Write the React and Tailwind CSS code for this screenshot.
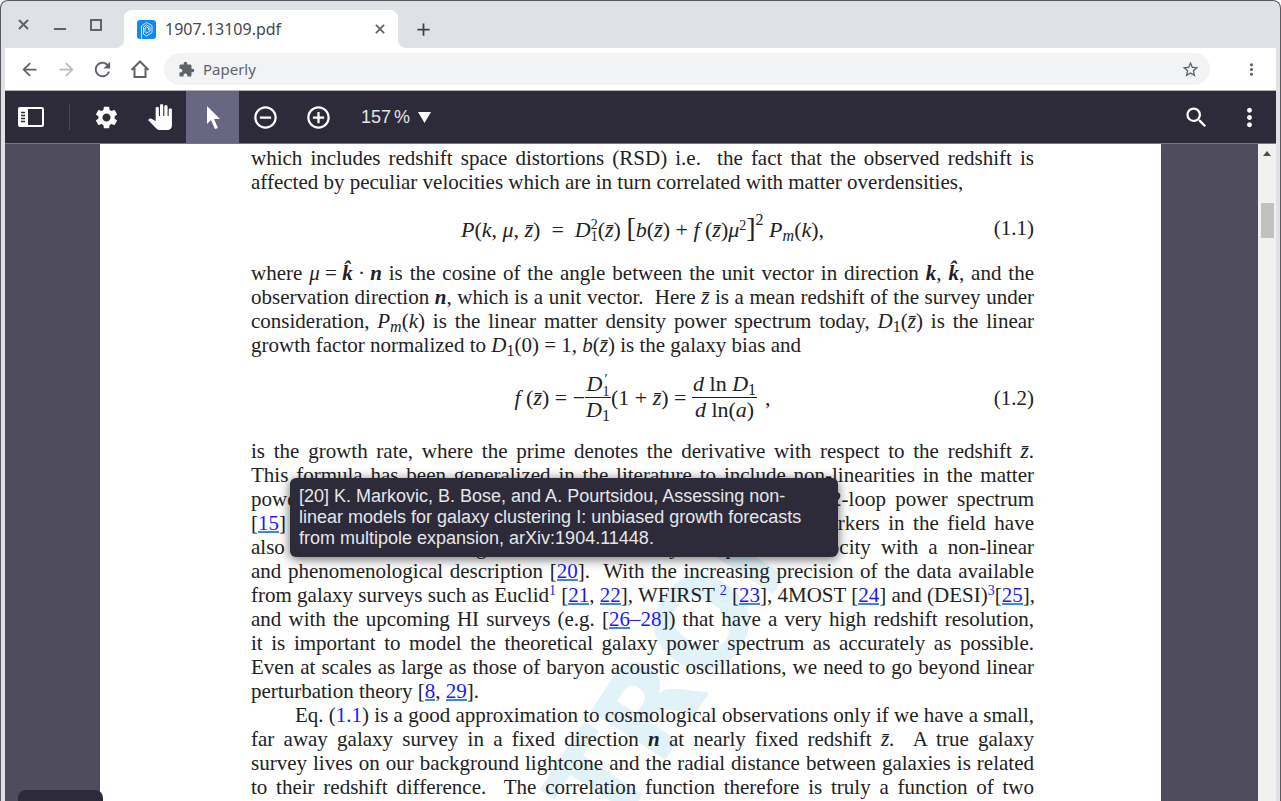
import {
  MdSettings,
  MdPanTool,
  MdRemoveCircleOutline,
  MdAddCircleOutline,
  MdSearch,
  MdMoreVert,
  MdArrowBack,
  MdArrowForward,
  MdRefresh,
  MdExtension,
  MdStarBorder,
  MdAdd,
} from "react-icons/md";

export default function App() {
  return (
    <div className="flex h-screen flex-col overflow-hidden rounded-t-lg border-t border-r border-l border-[#5a5a5e] bg-[#dee1e6] font-['Liberation_Sans',Arial,sans-serif]">
      <TabStrip />
      <div className="mr-1 ml-1 flex min-h-0 flex-1 flex-col">
        <AddressBar />
        <PdfToolbar />
        <Viewer />
      </div>
    </div>
  );
}

/* browser chrome */
function TabStrip() {
  return (
    <header className="flex h-[47px] shrink-0 items-end text-[#5f6368]">
      <div className="flex h-full items-center pl-[10px]">
        <button aria-label="Close window" className="grid w-6 place-items-center"><CrossIcon size={11} /></button>
        <button aria-label="Minimize" className="ml-[13px] grid h-3 w-6 place-items-center pt-2"><span className="h-[2px] w-3 bg-[#5f6368]" /></button>
        <button aria-label="Maximize" className="ml-3 grid w-6 place-items-center"><span className="size-3 border-2 border-[#5f6368]" /></button>
      </div>
      <svg className="ml-2" width="8" height="8" fill="white"><path d="M8 0v8H0a8 8 0 0 0 8-8z" /></svg>
      <div className="flex h-[38px] w-[274px] items-center rounded-t-lg bg-white px-[13px]">
        <Favicon />
        <span className="ml-[9px] flex-1 font-['Noto_Sans',sans-serif] text-base text-[#45484d]">1907.13109.pdf</span>
        <button aria-label="Close tab"><CrossIcon size={10} /></button>
      </div>
      <svg width="8" height="8" fill="white"><path d="M0 0v8h8a8 8 0 0 1-8-8z" /></svg>
      <button aria-label="New tab" className="mb-2 ml-[7px] text-[#3c4043]"><MdAdd size={21} /></button>
    </header>
  );
}

function AddressBar() {
  return (
    <nav className="flex h-[43px] shrink-0 items-center border-b border-[#b4b4b6] bg-white pl-[14px] text-[#5f6368]">
      <button aria-label="Back"><MdArrowBack size={21} /></button>
      <button aria-label="Forward" className="ml-4 text-[#babcbe]"><MdArrowForward size={21} /></button>
      <button aria-label="Reload" className="ml-[14px]"><MdRefresh size={23} /></button>
      <button aria-label="Home" className="ml-4"><HomeIcon /></button>
      <div className="ml-[14px] flex h-8 flex-1 items-center rounded-full bg-[#f1f3f4] pr-[10px] pl-[14px]">
        <MdExtension size={17} />
        <input
          aria-label="Address"
          defaultValue="Paperly"
          className="ml-2 min-w-0 flex-1 bg-transparent font-['Noto_Sans',sans-serif] text-[15px] outline-none"
        />
        <button aria-label="Bookmark"><MdStarBorder size={19} /></button>
      </div>
      <button aria-label="Browser menu" className="mr-[15px] ml-8"><MdMoreVert size={19} /></button>
    </nav>
  );
}

function PdfToolbar() {
  return (
    <div className="flex h-[53px] shrink-0 items-center border-b border-[#77777b] bg-[#2d2b39] text-white">
      <button aria-label="Toggle sidebar" className="ml-[13px]"><SidebarIcon /></button>
      <span className="mr-[10px] ml-[25px] h-[26px] w-px bg-[#4b4959]" />
      <ToolButton label="Settings"><MdSettings size={27} /></ToolButton>
      <ToolButton label="Hand tool"><MdPanTool size={26} /></ToolButton>
      <ToolButton label="Select tool" active>
        <svg width="14" height="23" viewBox="0 0 14 23" fill="currentColor">
          <path d="M1 0v18l4-4 4 9 3-1-4-9h6z" />
        </svg>
      </ToolButton>
      <ToolButton label="Zoom out"><MdRemoveCircleOutline size={27} /></ToolButton>
      <ToolButton label="Zoom in"><MdAddCircleOutline size={27} /></ToolButton>
      <button className="ml-4 flex items-center text-lg text-[#e4e4e6]">
        <span>157</span>
        <span className="ml-[3px]">%</span>
        <svg className="ml-2" width="13" height="11" viewBox="0 0 13 11" fill="white"><path d="M0 0h13L6.500 11z" /></svg>
      </button>
      <button aria-label="Search" className="ml-auto"><MdSearch size={27} /></button>
      <button aria-label="More" className="mr-3 ml-[25px]"><MdMoreVert size={29} /></button>
    </div>
  );
}

function ToolButton({ label, active, children }) {
  return (
    <button
      aria-label={label}
      aria-pressed={active}
      className={`grid h-full w-[53px] place-items-center ${active ? "bg-[#686680]" : ""}`}
    >
      {children}
    </button>
  );
}

function Viewer() {
  return (
    <main className="relative flex min-h-0 flex-1 bg-[#4e4c5d]">
      <div className="mr-[97px] ml-[95px] flex-1 overflow-hidden bg-white pl-6">
        <Page />
      </div>
      <div className="flex w-[18px] flex-col items-center bg-[#f1f1f1]">
        <svg className="mt-[7px]" width="8" height="5" viewBox="0 0 8 5" fill="#505050"><path d="M4 0l4 5H0z" /></svg>
        <div className="mt-[47px] h-[35px] w-[13px] bg-[#c1c1c1]" />
      </div>
      <div className="absolute -bottom-px left-[13px] h-3 w-[85px] rounded-t-lg bg-[#2d2b39]" />
    </main>
  );
}

/* document */
function Page() {
  return (
    <article className="relative mx-auto w-[783px] pt-[2px] font-['Liberation_Serif','Times_New_Roman',serif] text-[21px] leading-6 text-[#222222]">
      <span aria-hidden="true" className="absolute top-[592px] left-[363px] origin-[0_103px] -rotate-57 font-['DejaVu_Sans',sans-serif] text-[122px] leading-none font-bold whitespace-nowrap text-[#e1f3f9]">
        TRON
      </span>
      <div className="relative">
        <Line>which includes redshift space distortions (RSD) i.e. &nbsp;the fact that the observed redshift is</Line>
        <Line last>affected by peculiar velocities which are in turn correlated with matter overdensities,</Line>
      </div>

      <Equation number="(1.1)">
        <M>
          <i>P</i>(<i>k</i>, <i>μ</i>, <Zbar />)&nbsp; = &nbsp;<i>D</i><Scripts up="2" down="1" />(<Zbar />)&nbsp;
          <Big>[</Big><i>b</i>(<Zbar />) + <i>f</i> (<Zbar />)<i>μ</i><Sup>2</Sup><Big>]</Big>
          <span className="align-[12px] text-base leading-none">2</span>
          &nbsp;<i>P</i><Sub><i>m</i></Sub>(<i>k</i>),
        </M>
      </Equation>

      <div className="relative">
        <Line>where <M><i>μ</i> = <Khat /> · <Vec>n</Vec></M> is the cosine of the angle between the unit vector in direction <Vec>k</Vec>, <Khat />, and the</Line>
        <Line>observation direction <Vec>n</Vec>, which is a unit vector. &nbsp;Here <Zbar /> is a mean redshift of the survey under</Line>
        <Line>consideration, <M><i>P</i><Sub><i>m</i></Sub>(<i>k</i>)</M> is the linear matter density power spectrum today, <M><i>D</i><Sub>1</Sub>(<Zbar />)</M> is the linear</Line>
        <Line last>growth factor normalized to <M><i>D</i><Sub>1</Sub>(0) = 1</M>, <M><i>b</i>(<Zbar />)</M> is the galaxy bias and</Line>
      </div>

      <Equation number="(1.2)" tall>
        <M><i>f</i> (<Zbar />) = −</M>
        <Fraction top={<><i>D</i><Scripts up="′" down="1" /></>} bottom={<><i>D</i><Sub>1</Sub></>} />
        <M>(1 + <Zbar />) =&nbsp;</M>
        <Fraction top={<><i>d</i> ln <i>D</i><Sub>1</Sub></>} bottom={<><i>d</i> ln(<i>a</i>)</>} />
        <span className="ml-2">,</span>
      </Equation>

      <div className="relative">
        <Line>is the growth rate, where the prime denotes the derivative with respect to the redshift <Zbar />.</Line>
        <Line>This formula has been generalized in the literature to include non-linearities in the matter</Line>
        <Line>power spectrum, for example with the perturbative results up to 2-loop power spectrum</Line>
        <Line>[<Cite>15</Cite>] or effective field theory descriptions, and several other co-workers in the field have</Line>
        <Line>also studied the modelling of the distortions by the peculiar velocity with a non-linear</Line>
        <Line>and phenomenological description [<Cite>20</Cite>]. &nbsp;With the increasing precision of the data available</Line>
        <Line>from galaxy surveys such as Euclid<Note>1</Note> [<Cite>21</Cite>, <Cite>22</Cite>], WFIRST <Note>2</Note> [<Cite>23</Cite>], 4MOST [<Cite>24</Cite>] and (DESI)<Note>3</Note>[<Cite>25</Cite>],</Line>
        <Line>and with the upcoming HI surveys (e.g. [<Cite>26</Cite><Ref>–28</Ref>]) that have a very high redshift resolution,</Line>
        <Line>it is important to model the theoretical galaxy power spectrum as accurately as possible.</Line>
        <Line>Even at scales as large as those of baryon acoustic oscillations, we need to go beyond linear</Line>
        <Line last>perturbation theory [<Cite>8</Cite>, <Cite>29</Cite>].</Line>
        <Line indent>Eq. (<Ref>1.1</Ref>) is a good approximation to cosmological observations only if we have a small,</Line>
        <Line>far away galaxy survey in a fixed direction <Vec>n</Vec> at nearly fixed redshift <Zbar />. &nbsp;A true galaxy</Line>
        <Line>survey lives on our background lightcone and the radial distance between galaxies is related</Line>
        <Line>to their redshift difference. &nbsp;The correlation function therefore is truly a function of two</Line>
        <CitationTooltip />
      </div>
    </article>
  );
}

function CitationTooltip() {
  return (
    <div role="tooltip" className="absolute top-[39px] left-[39px] w-[548px] rounded-md bg-[#2d2b39] py-2 pr-3 pl-[9px] font-['Liberation_Sans',Arial,sans-serif] text-lg leading-[21px] text-[#e6e6ea] shadow-[0_2px_12px_rgba(0,0,0,0.6)]">
      [20] K. Markovic, B. Bose, and A. Pourtsidou, Assessing non-linear models for galaxy clustering I: unbiased growth forecasts from multipole expansion, arXiv:1904.11448.
    </div>
  );
}

/* typesetting helpers */
function Line({ children, last, indent }) {
  const align = last ? "text-left" : "text-justify [text-align-last:justify]";
  return <p className={`h-6 whitespace-nowrap ${align} ${indent ? "pl-11" : ""}`}>{children}</p>;
}

function Equation({ children, number, tall }) {
  return (
    <div className={`relative grid grid-cols-[1fr_auto_1fr] items-center ${tall ? "h-[82px]" : "h-[67px]"}`}>
      <div className="col-start-2 flex items-center text-[22px]">{children}</div>
      <span className="text-right">{number}</span>
    </div>
  );
}

function Fraction({ top, bottom }) {
  return (
    <span className="inline-flex flex-col text-center whitespace-nowrap">
      <span className="h-[26px] border-b border-[#222222] px-px">{top}</span>
      <span className="h-[26px] px-px">{bottom}</span>
    </span>
  );
}

function Scripts({ up, down }) {
  return (
    <span className="inline-flex flex-col align-middle text-sm leading-3">
      <span>{up}</span>
      <span>{down}</span>
    </span>
  );
}

function M({ children }) {
  return <span className="inline-block whitespace-nowrap">{children}</span>;
}
function Big({ children }) {
  return <span className="text-[28px] leading-none">{children}</span>;
}
function Sup({ children }) {
  return <sup className="text-sm leading-none">{children}</sup>;
}
function Sub({ children }) {
  return <sub className="text-base leading-none">{children}</sub>;
}
function Zbar() {
  return <i>z̄</i>;
}
function Khat() {
  return <b className="italic">k̂</b>;
}
function Vec({ children }) {
  return <b className="italic">{children}</b>;
}
function Cite({ children }) {
  return <a href="#references" className="inline-block h-[22px] border-b-2 border-[#3b82f6] text-[#1a1aff]">{children}</a>;
}
function Ref({ children }) {
  return <a href="#references" className="text-[#1a1aff]">{children}</a>;
}
function Note({ children }) {
  return <sup className="text-sm leading-none"><a href="#footnotes" className="text-[#1a1aff]">{children}</a></sup>;
}

/* icons */
function CrossIcon({ size }) {
  return (
    <svg width={size} height={size} viewBox="0 0 11 11" stroke="currentColor" strokeWidth="2">
      <path d="M1 1l9 9M10 1l-9 9" />
    </svg>
  );
}

function Favicon() {
  return (
    <svg width="19" height="19" viewBox="0 0 19 19" fill="none" stroke="white">
      <rect width="19" height="19" rx="3" fill="#1388f5" stroke="none" />
      <path d="M4.500 19V6l5-3.500 5.500 3v7L9.500 16l-3-2V7l3-2 3.500 2v4l-3.500 2-1.500-1V8l1.500-1 2 1v2" strokeWidth="0.800" />
    </svg>
  );
}

function HomeIcon() {
  return (
    <svg width="20" height="20" viewBox="0 0 20 20" fill="none" stroke="currentColor" strokeWidth="2">
      <path d="M1.500 11L10 2.500l8.500 8.500M4.500 9v9h11V9" />
    </svg>
  );
}

function SidebarIcon() {
  return (
    <svg width="26" height="20" viewBox="0 0 26 20">
      <rect width="26" height="20" rx="2" fill="white" />
      <path d="M10 2h14v16H10z" fill="#2d2b39" />
      <path d="M3 5.500h4M3 8.500h4M3 11.500h4M3 14.500h4" stroke="#2d2b39" strokeWidth="1.300" />
    </svg>
  );
}
